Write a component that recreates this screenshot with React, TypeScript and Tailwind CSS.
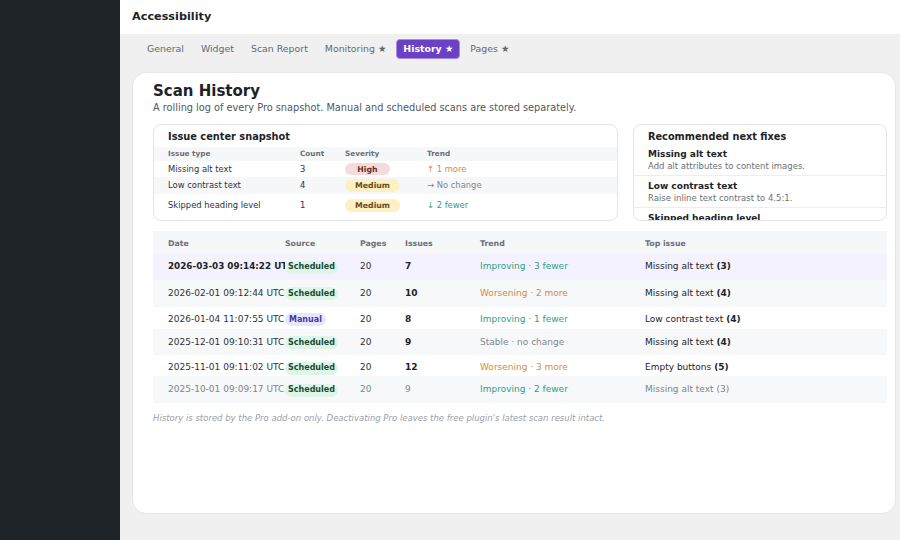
import React from "react";

type Row = {
  date: string;
  source: "Scheduled" | "Manual";
  issues: number;
  trend: string;
  trendClass: string;
  top: string;
  count: number;
  rowClass: string;
  bold?: boolean;
  faded?: boolean;
};

const rows: Row[] = [
  { date: "2026-03-03 09:14:22 UTC", source: "Scheduled", issues: 7, trend: "Improving · 3 fewer", trendClass: "text-[#2f9e86]", top: "Missing alt text", count: 3, rowClass: "h-[26px] bg-[#f4f2fe]", bold: true },
  { date: "2026-02-01 09:12:44 UTC", source: "Scheduled", issues: 10, trend: "Worsening · 2 more", trendClass: "text-[#d68a3c]", top: "Missing alt text", count: 4, rowClass: "h-[27px] bg-[#f7f8fa]" },
  { date: "2026-01-04 11:07:55 UTC", source: "Manual", issues: 8, trend: "Improving · 1 fewer", trendClass: "text-[#2f9e86]", top: "Low contrast text", count: 4, rowClass: "h-[22px] bg-white pt-[3px]" },
  { date: "2025-12-01 09:10:31 UTC", source: "Scheduled", issues: 9, trend: "Stable · no change", trendClass: "text-[#80858d]", top: "Missing alt text", count: 4, rowClass: "h-[26px] bg-[#f7f8fa] pt-[1px]" },
  { date: "2025-11-01 09:11:02 UTC", source: "Scheduled", issues: 12, trend: "Worsening · 3 more", trendClass: "text-[#d68a3c]", top: "Empty buttons", count: 5, rowClass: "h-[21px] bg-white pt-[5px]" },
  { date: "2025-10-01 09:09:17 UTC", source: "Scheduled", issues: 9, trend: "Improving · 2 fewer", trendClass: "text-[#2f9e86]", top: "Missing alt text", count: 3, rowClass: "h-[27px] bg-[#f7f8fa] pt-[1px]", faded: true },
];

const tabs = ["General", "Widget", "Scan Report", "Monitoring ★", "History ★", "Pages ★"];

function SourcePill({ source }: { source: Row["source"] }) {
  if (source === "Manual") {
    return (
      <span className="inline-flex h-[13px] items-center rounded-full bg-[#e4e8fb] px-[4px] text-[8px] font-bold text-[#4f32a8]">
        Manual
      </span>
    );
  }
  return (
    <span className="inline-flex h-[13px] items-center rounded-full bg-[#dcf7e6] px-[3px] text-[8px] font-bold text-[#24483c]">
      Scheduled
    </span>
  );
}

function SnapshotBox() {
  return (
    <div className="h-[97px] overflow-hidden rounded-[8px] border border-[#e3e5e9] bg-white">
      <div className="pl-[14px] pt-[6px] text-[9.8px] font-bold leading-[12px] text-[#1d2327]">
        Issue center snapshot
      </div>
      <div className="mt-[4px] text-[8.4px] text-[#2c3338]">
        <div className="grid h-[14px] grid-cols-[146px_45px_82px_1fr] items-center bg-[#f6f7f9] text-[7.3px] font-bold text-[#6b6f7a]">
          <span className="pl-[14px]">Issue type</span>
          <span>Count</span>
          <span>Severity</span>
          <span>Trend</span>
        </div>
        <div className="grid h-[16px] grid-cols-[146px_45px_82px_1fr] items-center">
          <span className="pl-[14px]">Missing alt text</span>
          <span>3</span>
          <span>
            <span className="inline-flex h-[12px] w-[45px] items-center justify-center rounded-full bg-[#f5dcdc] text-[7.8px] font-bold text-[#6e2b2b]">
              High
            </span>
          </span>
          <span className="text-[#d68a3c]">↑ 1 more</span>
        </div>
        <div className="grid h-[17px] grid-cols-[146px_45px_82px_1fr] items-center bg-[#f6f7f9]">
          <span className="pl-[14px]">Low contrast text</span>
          <span>4</span>
          <span>
            <span className="inline-flex h-[13px] w-[55px] items-center justify-center rounded-full bg-[#fdf1c4] text-[7.8px] font-bold text-[#6b4a1a]">
              Medium
            </span>
          </span>
          <span className="text-[#80858d]">→ No change</span>
        </div>
        <div className="grid h-[23px] grid-cols-[146px_45px_82px_1fr] items-center">
          <span className="pl-[14px]">Skipped heading level</span>
          <span>1</span>
          <span>
            <span className="inline-flex h-[13px] w-[55px] items-center justify-center rounded-full bg-[#fdf1c4] text-[7.8px] font-bold text-[#6b4a1a]">
              Medium
            </span>
          </span>
          <span className="text-[#2f9e86]">↓ 2 fewer</span>
        </div>
      </div>
    </div>
  );
}

function RecommendedBox() {
  return (
    <div className="h-[97px] overflow-hidden rounded-[8px] border border-[#e3e5e9] bg-white">
      <div className="pl-[14px] pt-[6px] text-[9.75px] font-bold leading-[12px] text-[#1d2327]">
        Recommended next fixes
      </div>
      <div className="border-b border-[#eceef1] px-[14px] pb-[3px] pt-[6px]">
        <div className="text-[9px] font-bold leading-[11px] text-[#1d2327]">Missing alt text</div>
        <div className="mt-[1px] text-[8.5px] leading-[11px] text-[#6b7079]">Add alt attributes to content images.</div>
      </div>
      <div className="border-b border-[#eceef1] px-[14px] pb-[3px] pt-[5px]">
        <div className="text-[9px] font-bold leading-[11px] text-[#1d2327]">Low contrast text</div>
        <div className="mt-[1px] text-[8.5px] leading-[11px] text-[#6b7079]">Raise inline text contrast to 4.5:1.</div>
      </div>
      <div className="px-[14px] pt-[5px]">
        <div className="text-[9px] font-bold leading-[11px] text-[#1d2327]">Skipped heading level</div>
        <div className="mt-[1px] text-[8.5px] leading-[11px] text-[#6b7079]">Keep heading levels in order.</div>
      </div>
    </div>
  );
}

function HistoryTable() {
  return (
    <div className="mt-[10px] text-[9px] text-[#2c3338]">
      <div className="grid h-[23px] grid-cols-[132px_75px_45px_75px_165px_1fr] items-center bg-[#f6f7f9] pt-[2px] text-[7.8px] font-bold text-[#6b6f7a]">
        <span className="pl-[15px]">Date</span>
        <span>Source</span>
        <span>Pages</span>
        <span>Issues</span>
        <span>Trend</span>
        <span>Top issue</span>
      </div>
      {rows.map((r) => (
        <div
          key={r.date}
          className={`grid grid-cols-[132px_75px_45px_75px_165px_1fr] items-center ${r.rowClass} ${r.faded ? "text-[#80858d]" : ""}`}
        >
          <span className={`overflow-hidden whitespace-nowrap pl-[15px] ${r.bold ? "text-[8.8px] font-bold text-[#1d2327]" : ""}`}>
            {r.date}
          </span>
          <span>
            <SourcePill source={r.source} />
          </span>
          <span>20</span>
          <span className={r.faded ? "" : "font-bold text-[#1d2327]"}>{r.issues}</span>
          <span className={r.trendClass}>{r.trend}</span>
          <span className={r.faded ? "" : "text-[#1d2327]"}>
            {r.top} <b className={r.faded ? "font-normal" : ""}>({r.count})</b>
          </span>
        </div>
      ))}
    </div>
  );
}

export default function App() {
  return (
    <div className="flex h-[540px] w-[900px] overflow-hidden bg-[#f0f0f1] font-['DejaVu_Sans',sans-serif]">
      <div className="w-[120px] shrink-0 bg-[#1d2327]" />
      <div className="flex min-w-0 flex-1 flex-col">
        <div className="flex h-[34px] items-center bg-white pl-[12px] pt-[1px] text-[11.25px] font-bold text-[#1d2327]">
          Accessibility
        </div>

        <div className="flex gap-[3px] pb-[13px] pl-[20px] pt-[5px]">
          {tabs.map((t) =>
            t === "History ★" ? (
              <span
                key={t}
                className="flex h-[20px] items-center rounded-[4px] border border-[#a58ce6] bg-[#6a40c4] px-[6px] text-[9.4px] font-bold text-white"
              >
                {t}
              </span>
            ) : (
              <span key={t} className="flex h-[20px] items-center px-[7px] text-[9.4px] text-[#646970]">
                {t}
              </span>
            )
          )}
        </div>

        <div className="ml-[12px] mr-[4px] h-[442px] rounded-[14px] border border-[#e6e6e7] bg-white pl-[20px] pr-[8px] pt-[9px]">
          <h1 className="text-[15px] font-bold leading-[18px] text-[#1d2327]">Scan History</h1>
          <p className="mt-[2px] text-[9.75px] leading-[12px] text-[#50575e]">
            A rolling log of every Pro snapshot. Manual and scheduled scans are stored separately.
          </p>

          <div className="mt-[10px] grid grid-cols-[465px_254px] gap-[15px]">
            <SnapshotBox />
            <RecommendedBox />
          </div>

          <HistoryTable />

          <p className="mt-[10px] text-[8.5px] italic leading-[10px] text-[#9ba0a6]">
            History is stored by the Pro add-on only. Deactivating Pro leaves the free plugin's latest scan result intact.
          </p>
        </div>
      </div>
    </div>
  );
}
